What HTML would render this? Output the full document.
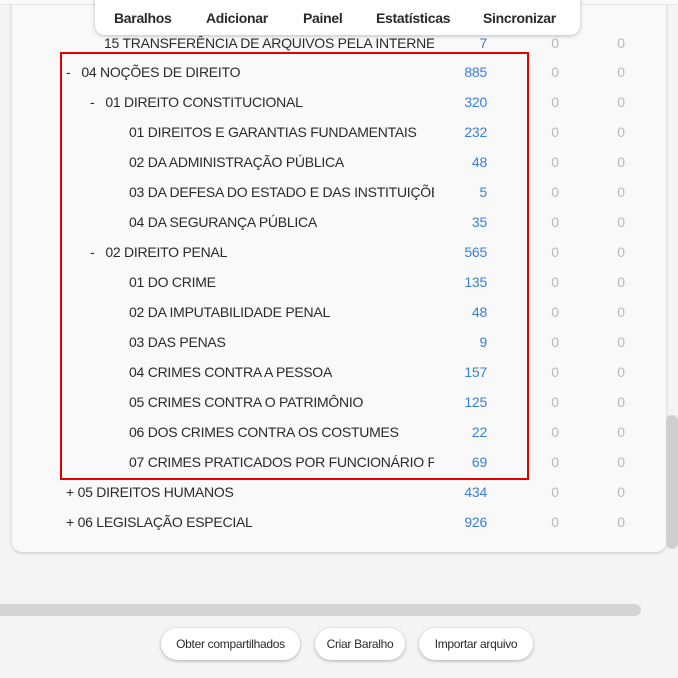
<!DOCTYPE html><html><head><meta charset="utf-8"><style>
body{margin:0;width:678px;height:678px;background:#f4f4f4;font-family:"Liberation Sans",sans-serif;position:relative;overflow:hidden;color:#2a2a2a}
.card{position:absolute;left:12px;top:-20px;width:654px;height:572px;background:#f9f9f9;border-radius:10px;box-shadow:0 1px 3px rgba(0,0,0,.2)}
.row{position:absolute;left:0;height:30px;line-height:30px;font-size:14px;letter-spacing:-0.25px;width:678px}
.nm{position:absolute;white-space:nowrap;overflow:hidden}
.c{position:absolute;right:191px;color:#3b7fd6;text-align:right}
.z1,.z2{position:absolute;color:#b8b8b8;width:10px;text-align:center}
.z1{left:550px}.z2{left:616px}
.nav{position:absolute;left:95px;top:-10px;width:485px;height:45px;background:#fff;border-radius:10px;box-shadow:0 1px 4px rgba(0,0,0,.25);font-weight:bold;font-size:14px;letter-spacing:-0.3px}
.nav span{position:absolute;top:20px}
.btn{position:absolute;top:628px;height:32px;line-height:32px;background:#fff;border-radius:16px;box-shadow:0 1px 3px rgba(0,0,0,.3);font-size:12px;letter-spacing:-0.3px;text-align:center}
</style></head><body>
<div class="card"></div>
<div style="position:absolute;left:0;top:0;width:678px;height:4px;background:#fafafa;border-bottom:1px solid #e6e6e6"></div>

<div class="row" style="top:28px"><span class="nm" style="left:104px;width:330px">15 TRANSFERÊNCIA DE ARQUIVOS PELA INTERNET</span><span class="c">7</span><span class="z1">0</span><span class="z2">0</span></div>
<div class="row" style="top:57px"><span class="nm" style="left:66px">-&nbsp;&nbsp;&nbsp;04 NOÇÕES DE DIREITO</span><span class="c">885</span><span class="z1">0</span><span class="z2">0</span></div>
<div class="row" style="top:87px"><span class="nm" style="left:90px">-&nbsp;&nbsp;&nbsp;01 DIREITO CONSTITUCIONAL</span><span class="c">320</span><span class="z1">0</span><span class="z2">0</span></div>
<div class="row" style="top:117px"><span class="nm" style="left:129px;width:305px">01 DIREITOS E GARANTIAS FUNDAMENTAIS</span><span class="c">232</span><span class="z1">0</span><span class="z2">0</span></div>
<div class="row" style="top:147px"><span class="nm" style="left:129px;width:305px">02 DA ADMINISTRAÇÃO PÚBLICA</span><span class="c">48</span><span class="z1">0</span><span class="z2">0</span></div>
<div class="row" style="top:177px"><span class="nm" style="left:129px;width:305px">03 DA DEFESA DO ESTADO E DAS INSTITUIÇÕES</span><span class="c">5</span><span class="z1">0</span><span class="z2">0</span></div>
<div class="row" style="top:207px"><span class="nm" style="left:129px;width:305px">04 DA SEGURANÇA PÚBLICA</span><span class="c">35</span><span class="z1">0</span><span class="z2">0</span></div>
<div class="row" style="top:237px"><span class="nm" style="left:90px">-&nbsp;&nbsp;&nbsp;02 DIREITO PENAL</span><span class="c">565</span><span class="z1">0</span><span class="z2">0</span></div>
<div class="row" style="top:267px"><span class="nm" style="left:129px;width:305px">01 DO CRIME</span><span class="c">135</span><span class="z1">0</span><span class="z2">0</span></div>
<div class="row" style="top:297px"><span class="nm" style="left:129px;width:305px">02 DA IMPUTABILIDADE PENAL</span><span class="c">48</span><span class="z1">0</span><span class="z2">0</span></div>
<div class="row" style="top:327px"><span class="nm" style="left:129px;width:305px">03 DAS PENAS</span><span class="c">9</span><span class="z1">0</span><span class="z2">0</span></div>
<div class="row" style="top:357px"><span class="nm" style="left:129px;width:305px">04 CRIMES CONTRA A PESSOA</span><span class="c">157</span><span class="z1">0</span><span class="z2">0</span></div>
<div class="row" style="top:387px"><span class="nm" style="left:129px;width:305px">05 CRIMES CONTRA O PATRIMÔNIO</span><span class="c">125</span><span class="z1">0</span><span class="z2">0</span></div>
<div class="row" style="top:417px"><span class="nm" style="left:129px;width:305px">06 DOS CRIMES CONTRA OS COSTUMES</span><span class="c">22</span><span class="z1">0</span><span class="z2">0</span></div>
<div class="row" style="top:447px"><span class="nm" style="left:129px;width:305px">07 CRIMES PRATICADOS POR FUNCIONÁRIO PÚBLICO</span><span class="c">69</span><span class="z1">0</span><span class="z2">0</span></div>
<div class="row" style="top:477px"><span class="nm" style="left:66px">+ 05 DIREITOS HUMANOS</span><span class="c">434</span><span class="z1">0</span><span class="z2">0</span></div>
<div class="row" style="top:507px"><span class="nm" style="left:66px">+ 06 LEGISLAÇÃO ESPECIAL</span><span class="c">926</span><span class="z1">0</span><span class="z2">0</span></div>

<div style="position:absolute;left:60px;top:52px;width:465px;height:424px;border:2px solid #e00000"></div>

<div class="nav"><span style="left:19px">Baralhos</span><span style="left:111px">Adicionar</span><span style="left:208px">Painel</span><span style="left:281px">Estatísticas</span><span style="left:388px">Sincronizar</span></div>

<div style="position:absolute;left:666px;top:415px;width:12px;height:134px;background:#cfcfcf;border-radius:6px"></div>
<div style="position:absolute;left:-6px;top:604px;width:647px;height:12px;background:#d4d4d4;border-radius:6px"></div>

<div class="btn" style="left:161px;width:139px">Obter compartilhados</div>
<div class="btn" style="left:315px;width:90px">Criar Baralho</div>
<div class="btn" style="left:419px;width:114px">Importar arquivo</div>
</body></html>
